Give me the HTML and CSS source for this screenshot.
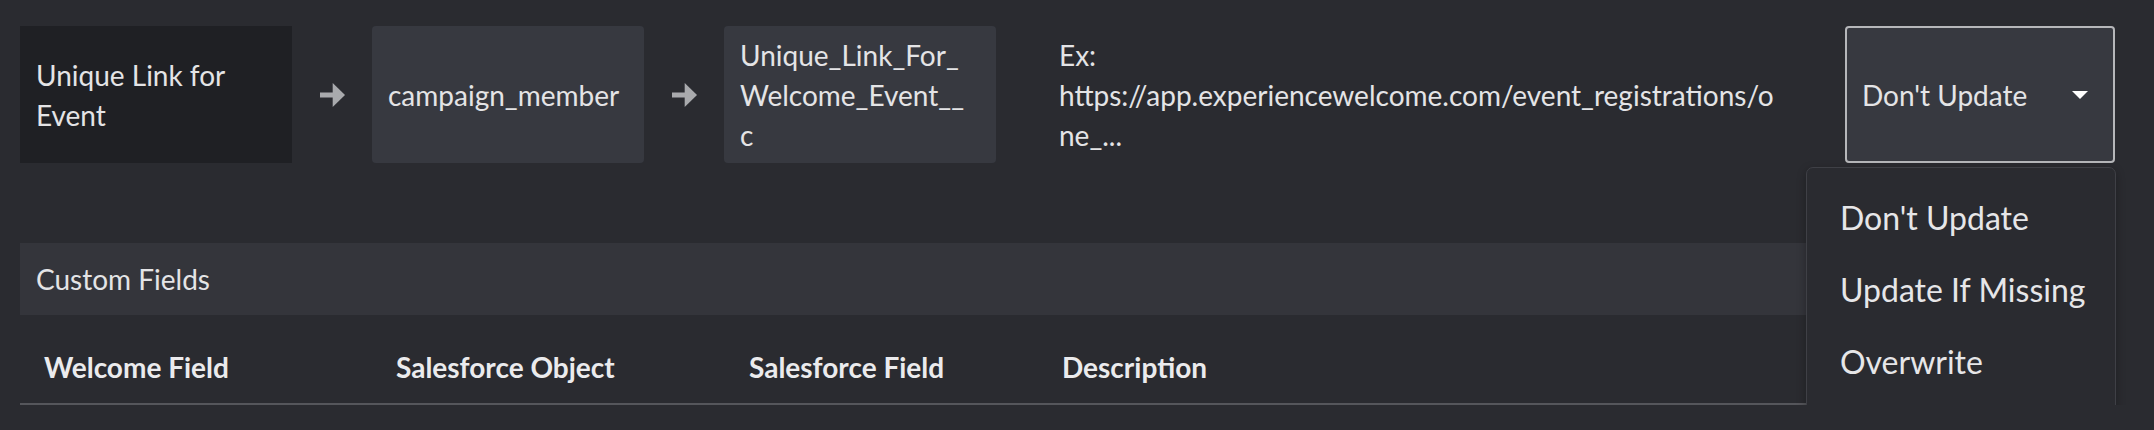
FILE: index.html
```html
<!DOCTYPE html>
<html lang="en">
<head>
    <meta charset="UTF-8">
    <meta name="viewport" content="width=device-width, initial-scale=1.0">
    <title>Field Mapping</title>
    <link rel="stylesheet" href="styles.css">
</head>
<body>
    <div class="page">
        <div class="mapping-row">
            <div class="field-box source">Unique Link for Event</div>
            <div class="arrow">
                <svg width="25" height="24" viewBox="0 0 25 24"><rect x="0" y="9.5" width="13.5" height="5" fill="#a9aaad"/><polygon points="12.7,0 25,12 12.7,24" fill="#a9aaad"/></svg>
            </div>
            <div class="field-box target">campaign_member</div>
            <div class="arrow">
                <svg width="25" height="24" viewBox="0 0 25 24"><rect x="0" y="9.5" width="13.5" height="5" fill="#a9aaad"/><polygon points="12.7,0 25,12 12.7,24" fill="#a9aaad"/></svg>
            </div>
            <div class="field-box target">Unique_Link_For_<br>Welcome_Event__<br>c</div>
            <div class="description">Ex:<br>https://app.experiencewelcome.com/event_registrations/o<br>ne_...</div>
            <div class="select-wrap">
                <div class="select">
                    <span>Don't Update</span>
                    <span class="caret"></span>
                </div>
                <ul class="menu">
                    <li>Don't Update</li>
                    <li>Update If Missing</li>
                    <li>Overwrite</li>
                </ul>
            </div>
        </div>

        <div class="section-title">Custom Fields</div>

        <div class="table-head">
            <div class="th">Welcome Field</div>
            <div class="th">Salesforce Object</div>
            <div class="th">Salesforce Field</div>
            <div class="th">Description</div>
        </div>
    </div>
</body>
</html>
```

FILE: styles.css
```css
* {
    margin: 0;
    padding: 0;
    box-sizing: border-box;
}

body {
    font-family: Lato, 'Open Sans', sans-serif;
    font-size: 28px;
    line-height: 40px;
    color: #e4e4e6;
    background: #2a2b30;
}

.page {
    padding: 26px 39px 0 20px;
}

.mapping-row {
    display: flex;
    align-items: center;
}

.field-box {
    width: 272px;
    min-height: 137px;
    padding: 8px 16px;
    display: flex;
    align-items: center;
    flex-shrink: 0;
}

.field-box.source {
    background: #1f2024;
}

.field-box.target {
    background: #373940;
    border-radius: 4px;
}

.arrow {
    width: 80px;
    flex-shrink: 0;
    display: flex;
    justify-content: center;
}

.arrow svg {
    display: block;
}

.description {
    flex: 1;
    margin: 0 64px 0 63px;
    white-space: nowrap;
}

.select-wrap {
    width: 270px;
    flex-shrink: 0;
    position: relative;
}

.select {
    height: 137px;
    background: #373940;
    border: 2px solid #b6b7ba;
    border-radius: 4px;
    padding: 0 25px 0 15px;
    display: flex;
    align-items: center;
    justify-content: space-between;
}

.caret {
    width: 0;
    height: 0;
    border-left: 8px solid transparent;
    border-right: 8px solid transparent;
    border-top: 8px solid #ffffff;
}

/* dropdown options, opened under the select */
.menu {
    list-style: none;
    position: absolute;
    top: calc(100% + 4px);
    right: -1px;
    width: 310px;
    padding: 14px 0 19px;
    background: #2a2b30;
    border: 1px solid #3f4046;
    border-radius: 7px;
    box-shadow: 0 3px 10px rgba(0, 0, 0, 0.3);
    z-index: 2;
}

.menu li {
    font-size: 32px;
    line-height: 72px;
    padding-left: 33px;
    color: #e6e6e8;
}

.section-title {
    margin-top: 80px;
    background: #34353b;
    padding: 16px;
}

.table-head {
    margin-top: 16px;
    display: grid;
    grid-template-columns: 352px 353px 313px 1fr;
    border-bottom: 2px solid #55565b;
}

.th {
    padding: 16px 0 16px 24px;
    font-weight: 700;
    color: #ebebed;
}
```
